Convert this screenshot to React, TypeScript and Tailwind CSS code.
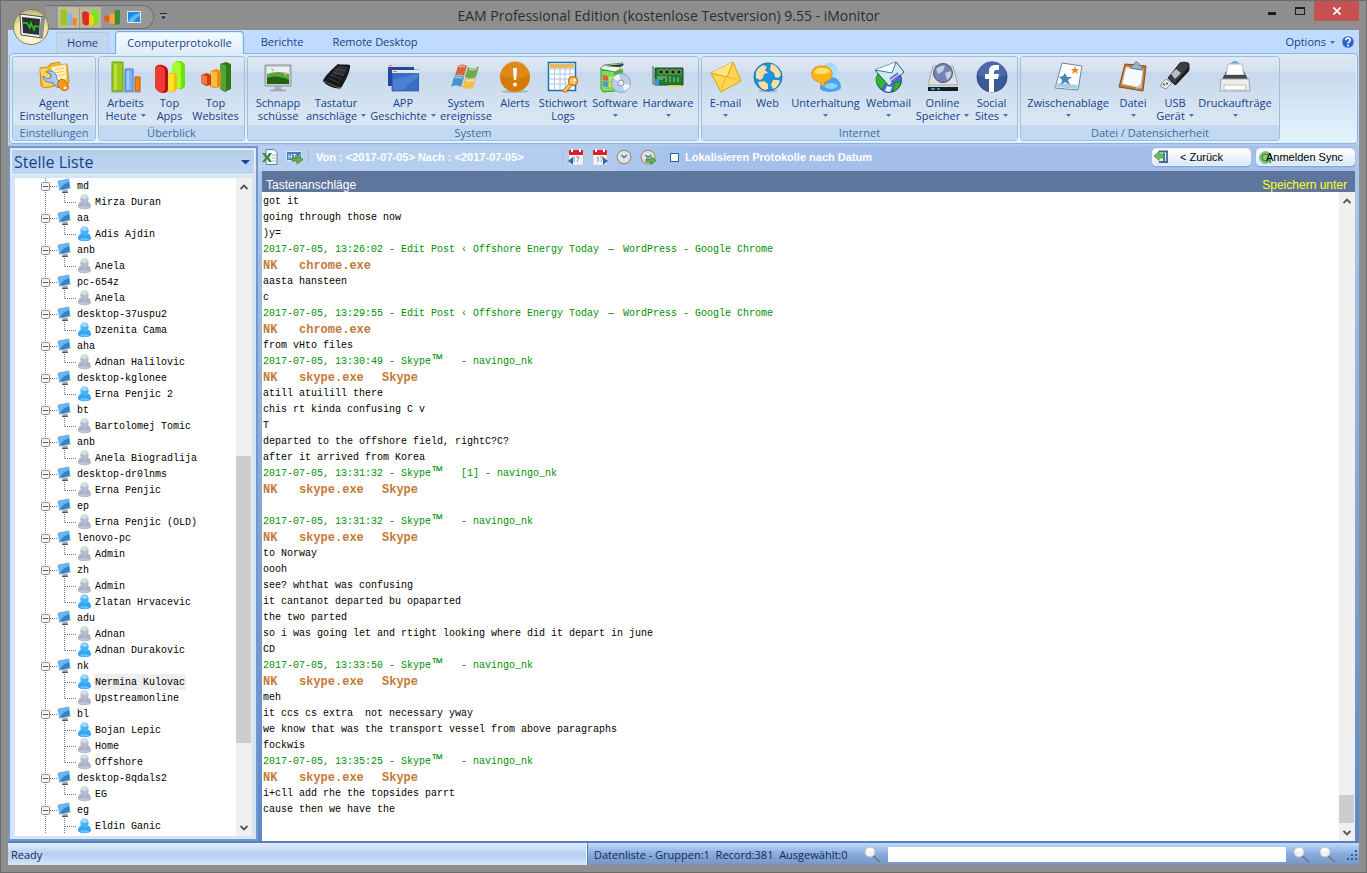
import { useState, type ReactNode } from 'react';

/* ---------- ribbon icons (32x32) ---------- */

const Icon = ({ children }: { children: ReactNode }) => (
  <svg width="32" height="32" viewBox="0 0 32 32" aria-hidden="true" className="shrink-0">
    {children}
  </svg>
);

const AgentIcon = () => (
  <Icon>
    <path d="M2 7l8-1 2-3 9-2 2 3 6-1 2 19-24 5-4-2z" fill="#f7b731" stroke="#d98a12" />
    <path d="M13 6l15-3 1 15-14 4z" fill="#fff3c4" stroke="#e2b24a" strokeWidth=".6" />
    <path d="M16 9l10-2M17 12l9-2M19 15l8-2" stroke="#f5c95a" />
    <path d="M2 8l7-1 5 18-8 1z" fill="#fbd25b" />
    <path d="M8 11c3-2 9-1 10 3 1 2 0 3 1 4l5 5-4 4-6-6c-4 1-9-1-9-6l4 3 4-1 0-4z" fill="#a9cdf6" stroke="#4b86cf" />
    <path d="M23 18l3 1 4 5c2 4-2 7-6 5l-5-5 1-3z" fill="#f39a25" stroke="#c46d0b" />
    <circle cx="27" cy="27" r="1.3" fill="#fff" />
  </Icon>
);

const BarsIcon = () => (
  <Icon>
    <path d="M1 31h30" stroke="#7f97a9" />
    <path d="M2 1h11v29H2z" fill="#9ccc14" stroke="#6c9c08" />
    <path d="M4 3h3v26H4z" fill="#b8df43" />
    <path d="M15 8h8v22h-8z" fill="#7fb0f5" stroke="#4779c6" />
    <path d="M17 10h2v19h-2z" fill="#a9cdfb" />
    <path d="M25 16h5v14h-5z" fill="#f68712" stroke="#b95a05" />
  </Icon>
);

const TopAppsIcon = () => (
  <Icon>
    <path d="M19 5c0-3 3-5 6-5s6 2 6 5v19c0 3-3 5-6 4z" fill="#6ee00e" />
    <path d="M18 5c0-3 3-5 6-4s3 2 3 5v20c-3 2-6 1-9 0z" fill="#a4ff2b" />
    <path d="M12 14c2-3 9-3 11 0v14c-2 4-9 4-11 1z" fill="#f7bd05" />
    <path d="M12 14c2-2 7-2 8 0v15c-2 2-7 2-8 0z" fill="#ffe22c" />
    <path d="M1 8c0-3 3-5 7-4s6 3 6 6v18c0 3-2 4-5 4S2 29 1 26z" fill="#b90d0d" />
    <path d="M1 9c0-4 3-5 6-4s4 3 4 5v18c0 3-2 3-4 3s-5-2-6-5z" fill="#ef3a32" />
  </Icon>
);

const TopSitesIcon = () => (
  <Icon>
    <path d="M20 3l6-2 5 2v25l-6 3-5-3z" fill="#2d7a1d" />
    <path d="M20 3l6 1v26l-6-2z" fill="#52a533" />
    <path d="M10 10l7-2 4 2v16l-6 1-5-1z" fill="#e58c15" />
    <path d="M10 10l7 1v15l-7-1z" fill="#fbbd3c" />
    <path d="M1 14l6-2 4 2v10l-5 1-5-3z" fill="#c93d18" />
    <path d="M1 14l6 1v9l-6-2z" fill="#f6763c" />
  </Icon>
);

const ScreenshotIcon = () => (
  <Icon>
    <path d="M3 4h26v21H3z" fill="#c4cad1" stroke="#8b949d" />
    <path d="M5 6h22v17H5z" fill="#e9f3ee" />
    <path d="M5 13q11-4 22 0v10H5z" fill="#57a83c" />
    <path d="M5 17q10-4 22 2v4H5z" fill="#226015" />
    <path d="M9 7l3 1-1 3zM22 12l3-1-1 5" fill="#ef9cc1" />
    <path d="M13 25h6l1 4h-8z" fill="#a6adb5" />
    <path d="M8 29.500h16" stroke="#9aa2aa" strokeWidth="1.600" />
  </Icon>
);

const KeyboardIcon = () => (
  <Icon>
    <path d="M18 3c3 1 8 0 12 1 1 5-5 17-9 23-3 2-15-2-18-7C3 17 13 7 18 3z" fill="#17191b" />
    <path d="M18 5l10 1-5 10c-4-3-9-3-13 0z" fill="#2e3236" />
    <path d="M15 8l11 2M13 11l11 3M10 14l12 4M8 17l12 5" stroke="#4b5157" strokeWidth=".7" />
    <path d="M4 20c4 2 11 6 17 7" stroke="#5d666f" fill="none" />
  </Icon>
);

const AppIcon = () => (
  <Icon>
    <path d="M1 3h26v22H1z" fill="#23489f" />
    <path d="M1 3h26v3H1z" fill="#d8dde4" />
    <path d="M2 4.500h3" stroke="#e38439" />
    <path d="M5 9h27v21H5z" fill="#3a6fc6" stroke="#24509f" strokeWidth=".7" />
    <path d="M5 9h27v3H5z" fill="#e4e7ea" />
    <path d="M6 10.500h4" stroke="#e38439" />
    <path d="M6 29V18q13-1 25-6v4q-9 6-14 13z" fill="#5f92de" opacity=".5" />
  </Icon>
);

const WindowsIcon = () => (
  <Icon>
    <path d="M8 5c3-2 6-2 9 0l-3 10c-3-2-6-2-9 0z" fill="#d9633a" />
    <path d="M18 6c3 2 7 2 11-1l-3 11c-4 2-8 2-11 0z" fill="#74a94a" />
    <path d="M4 16c3-2 7-2 10 0l-3 10c-3-2-7-2-10 0z" fill="#4693cb" />
    <path d="M15 17c3 2 7 2 11 0l-3 10c-4 2-8 1-11-1z" fill="#f0bf4d" />
    <path d="M9 6c3-1 5-1 6 0M5 17c3-1 5-1 7 0M19 8c3 1 6 1 8-1M16 19c3 1 6 1 8 0" stroke="#fff" strokeWidth="1.500" opacity=".5" fill="none" />
  </Icon>
);

const AlertIcon = () => (
  <Icon>
    <ellipse cx="16" cy="30.500" rx="14" ry="1.300" fill="#8a94a0" opacity=".6" />
    <circle cx="16" cy="16" r="15" fill="#d57a05" />
    <path d="M2 14a14 14 0 0128 0c-8 4-20 4-28 0z" fill="#e8962b" opacity=".5" />
    <path d="M14 7h4l-.8 12h-2.400z" fill="#fff" />
    <circle cx="16" cy="23.500" r="2" fill="#fff" />
  </Icon>
);

const KeywordIcon = () => (
  <Icon>
    <path d="M1.500 1.500h27v28h-27z" fill="#fff" stroke="#1d70ab" strokeWidth="1.500" />
    <path d="M3 3h24v4H3z" fill="#f8b545" />
    <path d="M2 8h26M2 13h26M2 18h26M2 23h26M7.500 2v27M13 2v27M18 2v27M23 2v27" stroke="#a9c6e3" />
    <circle cx="26" cy="20" r="4.500" fill="#f7c063" stroke="#c07a1b" strokeWidth="1.400" />
    <path d="M22 23l-6 6v2h4v-2h2v-2l4-3z" fill="#f7c063" stroke="#c07a1b" />
    <circle cx="27.500" cy="19" r="1.200" fill="#fff" />
  </Icon>
);

const Disc = () => (
  <>
    <circle cx="22" cy="22" r="9.500" fill="#b8cdea" stroke="#7790b5" strokeWidth=".7" />
    <path d="M22 22L14 17a9 9 0 016-4zM22 22l9 2a9 9 0 01-5 6z" fill="#fff" opacity=".8" />
    <circle cx="22" cy="22" r="3" fill="#e8eef7" stroke="#6f87ad" strokeWidth=".8" />
  </>
);

const SoftwareIcon = () => (
  <Icon>
    <path d="M2 9l14 1v20l-12 1-2-3z" fill="#7ddc5b" stroke="#3b9c35" />
    <path d="M16 10l8-2v20l-8 2z" fill="#4bb23e" />
    <path d="M1 8l4-4 19-2-4 7-4 2z" fill="#eef4ee" stroke="#3b7a3b" strokeWidth=".8" />
    <path d="M5 5l19-2 1 1-5 2z" fill="#1f3a26" />
    <path d="M4 14l5 1v5l-5-1z" fill="#e2603a" />
    <path d="M10 15l5 1v4h-5z" fill="#b9ec6a" />
    <path d="M4 20l5 1v5l-5-1z" fill="#4a95d9" />
    <path d="M10 21h5v5h-5z" fill="#f3d256" />
    <Disc />
  </Icon>
);

const HardwareIcon = () => (
  <Icon>
    <path d="M1 5v19" stroke="#7b828a" strokeWidth="1.500" />
    <path d="M3 7h28v17H3z" fill="#1f7a35" stroke="#0f5220" />
    <path d="M7 9h4v4H7zM13 9h4v4h-4zM19 9h4v4h-4zM25 9h4v4h-4z" fill="#101a12" stroke="#c7cf7d" strokeWidth=".7" />
    <path d="M5 16h8M5 18h6M14 15v6M18 15v6M22 16v5M26 16v5" stroke="#8fd28a" />
    <path d="M16 24h13v2H16z" fill="#e6d64c" />
    <path d="M3 18h4v6H3z" fill="#3c93e6" />
  </Icon>
);

const MailIcon = () => (
  <Icon>
    <path d="M1 12L23 1l8 19-20 11z" fill="#fdd550" stroke="#d8a01c" />
    <path d="M1 12l16 4L23 1" fill="#ffe583" stroke="#d8a01c" />
    <path d="M11 31l4-14M31 20l-13-4" stroke="#e8b93a" fill="none" />
  </Icon>
);

const WebIcon = () => (
  <Icon>
    <ellipse cx="16" cy="30" rx="10" ry="1.400" fill="#8a94a0" opacity=".5" />
    <circle cx="16" cy="16" r="14" fill="#1e94d6" stroke="#1277b3" />
    <path d="M4 12c1-4 4-7 8-8l3 2-2 3 3 3-4 1-1 4-3 2-4-2z" fill="#fbdca2" />
    <path d="M19 3c5 1 9 5 10 11l-3 3-3-1-1-4-4-3z" fill="#fbdca2" />
    <path d="M6 21l6-1 4 3v5l-3 1c-4-1-6-4-7-8z" fill="#fbdca2" />
    <path d="M21 19l5 0 2 1c-1 4-4 7-7 8l-2-4z" fill="#fbdca2" />
  </Icon>
);

const ChatIcon = () => (
  <Icon>
    <circle cx="20" cy="9" r="7.500" fill="#a5dbfb" />
    <path d="M10 27c0-8 5-11 11-11s10 4 10 11c-4 5-17 5-21 1z" fill="#4aa3ef" />
    <path d="M14 25c3-4 11-4 14 0-3 4-11 4-14 0z" fill="#8fd0fb" />
    <path d="M2 13c0-6 4-8 10-8s10 3 10 8-4 7-7 8l-2 5-3-5c-5-1-8-3-8-8z" fill="#fcb514" stroke="#e58f0a" />
    <path d="M4 12c1-4 4-5 8-5s7 1 8 4c-5 2-11 3-16 1z" fill="#ffe06a" />
  </Icon>
);

const WebmailIcon = () => (
  <Icon>
    <circle cx="16" cy="19" r="12.500" fill="#4a6fd8" stroke="#2b3f8f" />
    <path d="M3 17c3-5 6-7 9-8l3 10-6 9c-4-2-6-6-6-11zM22 21l6 0c-1 5-4 8-8 10z" fill="#33b533" stroke="#14701c" strokeWidth=".7" />
    <path d="M14 25l5 1-2 5-5-1z" fill="#e5eefc" />
    <path d="M2 9L23 1l8 10-15 14z" fill="#c9ecf5" stroke="#2d5666" />
    <path d="M2 9l17 3L23 1" fill="#effcff" stroke="#2d5666" strokeWidth=".8" />
    <path d="M17 18l8-6M18 21l9-7" stroke="#6e63c6" strokeWidth="1.600" />
  </Icon>
);

const OnlineIcon = () => (
  <Icon>
    <path d="M6 5h20l5 19H1z" fill="#dfe1e3" stroke="#a5a9ad" />
    <path d="M1 26h30v4H1z" fill="#1b1d20" />
    <path d="M4 28h4M10 28h3" stroke="#2fc3d8" strokeWidth="1.500" />
    <circle cx="16" cy="12" r="9.500" fill="#7583b0" stroke="#49557e" />
    <path d="M9 8c3-3 7-4 9-3l-2 5-5 3zM18 12l6-2c1 4-1 7-4 9z" fill="#c7d0e8" />
  </Icon>
);

const SocialIcon = () => (
  <Icon>
    <circle cx="16" cy="16" r="15" fill="#3b5998" stroke="#2c447a" />
    <path d="M2 14a14 14 0 0128 0c-7 3-20 3-28 0z" fill="#6a86c0" opacity=".4" />
    <path d="M13 31V18H9v-5h4v-3c0-4 3-6 6-6h4v5h-3c-1 0-2 1-2 2v2h5l-1 5h-4v13z" fill="#fff" />
  </Icon>
);

const ClipboardIcon = () => (
  <Icon>
    <path d="M10 2l20 3-4 24-23-2z" fill="#fdfefe" stroke="#6e8796" />
    <path d="M3 26l22 2 1-4-21-2z" fill="#a5d2e8" />
    <path d="M13 12l2 4 5 0-4 3 2 5-5-3-4 3 1-5-3-3 4-1z" fill="#4a86b5" />
    <path d="M23 5l1 3 3 0-2 2 1 3-3-2-3 2 1-3-2-2 3 0z" fill="#f08a2b" />
  </Icon>
);

const FileIcon = () => (
  <Icon>
    <path d="M8 3l21 2-3 25-24-4z" fill="#c07a30" stroke="#8a4f15" />
    <path d="M9 6l17 2-2 19-19-4z" fill="#f9fafb" stroke="#c3c8cc" />
    <path d="M18 28l6-1 1-6z" fill="#bfc6cc" />
    <path d="M13 7l2-3h2c0-4 5-4 5 0l3 1v4z" fill="#9fb4be" stroke="#5c7480" />
  </Icon>
);

const UsbIcon = () => (
  <Icon>
    <path d="M21 2c1-1 9-1 9 1v6L16 24l-7-7z" fill="#3b3f43" stroke="#1f2224" />
    <path d="M30 5v5L17 24l-1-2z" fill="#1c1e20" />
    <path d="M12 13l5-5 5 4-6 6z" fill="#b9bdc1" />
    <path d="M7 18l6 4-6 6-5-2v-3z" fill="#e8e9ea" stroke="#8d9296" />
    <path d="M4 23l2 1M7 22l2 1" stroke="#55595d" strokeWidth="1.500" />
  </Icon>
);

const PrinterIcon = () => (
  <Icon>
    <path d="M12 3c1-3 7-3 8 0" fill="#7ab9de" stroke="#4a90bd" />
    <path d="M6 12l2-3h16l2 3 2 8H4z" fill="#5a5f63" />
    <path d="M9 3h14l2 11H7z" fill="#fbfdff" stroke="#a9bccb" />
    <path d="M5 14h22l2 5H3z" fill="#43484c" />
    <path d="M2 18h28l1 12H1z" fill="#eceeee" stroke="#a1a5a8" />
    <path d="M5 24h22v5H5z" fill="#fdfdfd" stroke="#bbbfc2" />
  </Icon>
);

/* ---------- data ---------- */

type RibbonItem = {
  lines: string[];
  icon: () => ReactNode;
  width: string;
  menu?: boolean;
};

const RIBBON: { name: string; items: RibbonItem[] }[] = [
  {
    name: 'Einstellungen',
    items: [{ lines: ['Agent', 'Einstellungen'], icon: AgentIcon, width: 'w-20' }],
  },
  {
    name: 'Überblick',
    items: [
      { lines: ['Arbeits', 'Heute'], icon: BarsIcon, width: 'w-11', menu: true },
      { lines: ['Top', 'Apps'], icon: TopAppsIcon, width: 'w-11' },
      { lines: ['Top', 'Websites'], icon: TopSitesIcon, width: 'w-12' },
    ],
  },
  {
    name: 'System',
    items: [
      { lines: ['Schnapp', 'schüsse'], icon: ScreenshotIcon, width: 'w-[54px]' },
      { lines: ['Tastatur', 'anschläge'], icon: KeyboardIcon, width: 'w-[62px]', menu: true },
      { lines: ['APP', 'Geschichte'], icon: AppIcon, width: 'w-[72px]', menu: true },
      { lines: ['System', 'ereignisse'], icon: WindowsIcon, width: 'w-[54px]' },
      { lines: ['Alerts'], icon: AlertIcon, width: 'w-11' },
      { lines: ['Stichwort', 'Logs'], icon: KeywordIcon, width: 'w-[52px]' },
      { lines: ['Software'], icon: SoftwareIcon, width: 'w-[52px]', menu: true },
      { lines: ['Hardware'], icon: HardwareIcon, width: 'w-[54px]', menu: true },
    ],
  },
  {
    name: 'Internet',
    items: [
      { lines: ['E-mail'], icon: MailIcon, width: 'w-10', menu: true },
      { lines: ['Web'], icon: WebIcon, width: 'w-11' },
      { lines: ['Unterhaltung'], icon: ChatIcon, width: 'w-[72px]', menu: true },
      { lines: ['Webmail'], icon: WebmailIcon, width: 'w-[54px]', menu: true },
      { lines: ['Online', 'Speicher'], icon: OnlineIcon, width: 'w-[54px]', menu: true },
      { lines: ['Social', 'Sites'], icon: SocialIcon, width: 'w-11', menu: true },
    ],
  },
  {
    name: 'Datei / Datensicherheit',
    items: [
      { lines: ['Zwischenablage'], icon: ClipboardIcon, width: 'w-[86px]', menu: true },
      { lines: ['Datei'], icon: FileIcon, width: 'w-11', menu: true },
      { lines: ['USB', 'Gerät'], icon: UsbIcon, width: 'w-10', menu: true },
      { lines: ['Druckaufträge'], icon: PrinterIcon, width: 'w-20', menu: true },
    ],
  },
];

const GROUP_WIDTHS = ['w-[84px]', 'w-[147px]', 'w-[452px]', 'w-[317px]', 'w-[260px]'];

type Agent = { name: string; online?: boolean };

const TREE: { pc: string; users: Agent[] }[] = [
  { pc: 'md', users: [{ name: 'Mirza Duran' }] },
  { pc: 'aa', users: [{ name: 'Adis Ajdin', online: true }] },
  { pc: 'anb', users: [{ name: 'Anela' }] },
  { pc: 'pc-654z', users: [{ name: 'Anela' }] },
  { pc: 'desktop-37uspu2', users: [{ name: 'Dzenita Cama', online: true }] },
  { pc: 'aha', users: [{ name: 'Adnan Halilovic' }] },
  { pc: 'desktop-kglonee', users: [{ name: 'Erna Penjic 2', online: true }] },
  { pc: 'bt', users: [{ name: 'Bartolomej Tomic' }] },
  { pc: 'anb', users: [{ name: 'Anela Biogradlija' }] },
  { pc: 'desktop-dr0lnms', users: [{ name: 'Erna Penjic' }] },
  { pc: 'ep', users: [{ name: 'Erna Penjic (OLD)' }] },
  { pc: 'lenovo-pc', users: [{ name: 'Admin' }] },
  { pc: 'zh', users: [{ name: 'Admin' }, { name: 'Zlatan Hrvacevic', online: true }] },
  { pc: 'adu', users: [{ name: 'Adnan' }, { name: 'Adnan Durakovic', online: true }] },
  { pc: 'nk', users: [{ name: 'Nermina Kulovac', online: true }, { name: 'Upstreamonline' }] },
  { pc: 'bl', users: [{ name: 'Bojan Lepic', online: true }, { name: 'Home' }, { name: 'Offshore' }] },
  { pc: 'desktop-8qdals2', users: [{ name: 'EG' }] },
  { pc: 'eg', users: [{ name: 'Eldin Ganic', online: true }] },
];

type LogLine =
  | { kind: 'text'; text: string }
  | { kind: 'head'; text: string }
  | { kind: 'app'; exe: string; app?: string };

const text = (t: string): LogLine => ({ kind: 'text', text: t });
const head = (t: string): LogLine => ({ kind: 'head', text: t });
const skype: LogLine = { kind: 'app', exe: 'skype.exe', app: 'Skype' };
const chrome: LogLine = { kind: 'app', exe: 'chrome.exe' };

const LOG: LogLine[] = [
  text('got it'),
  text('going through those now'),
  text(')y='),
  head('2017-07-05, 13:26:02 - Edit Post ‹ Offshore Energy Today — WordPress - Google Chrome'),
  chrome,
  text('aasta hansteen'),
  text('c'),
  head('2017-07-05, 13:29:55 - Edit Post ‹ Offshore Energy Today — WordPress - Google Chrome'),
  chrome,
  text('from vHto files'),
  head('2017-07-05, 13:30:49 - Skype™   - navingo_nk'),
  skype,
  text('atill atuilill there'),
  text('chis rt kinda confusing C v'),
  text('T'),
  text('departed to the offshore field, rightC?C?'),
  text('after it arrived from Korea'),
  head('2017-07-05, 13:31:32 - Skype™   [1] - navingo_nk'),
  skype,
  text(''),
  head('2017-07-05, 13:31:32 - Skype™   - navingo_nk'),
  skype,
  text('to Norway'),
  text('oooh'),
  text('see? whthat was confusing'),
  text('it cantanot departed bu opaparted'),
  text('the two parted'),
  text('so i was going let and rtight looking where did it depart in june'),
  text('CD'),
  head('2017-07-05, 13:33:50 - Skype™   - navingo_nk'),
  skype,
  text('meh'),
  text('it ccs cs extra  not necessary yway'),
  text('we know that was the transport vessel from above paragraphs'),
  text('fockwis'),
  head('2017-07-05, 13:35:25 - Skype™   - navingo_nk'),
  skype,
  text('i+cll add rhe the topsides parrt'),
  text('cause then we have the'),
];

/* ---------- small parts ---------- */

const Caret = () => (
  <svg width="5" height="3" viewBox="0 0 5 3" aria-hidden="true" className="inline-block shrink-0">
    <path d="M0 0h5L2.500 3z" fill="#4a72b0" />
  </svg>
);

function RibbonButton({ item }: { item: RibbonItem }) {
  const ItemIcon = item.icon;
  const single = item.lines.length === 1;
  return (
    <button type="button" className={`flex flex-col items-center whitespace-nowrap text-[#15428b] ${item.width}`}>
      <ItemIcon />
      <span className="mt-[3px] leading-[13px]">{item.lines[0]}</span>
      <span className="flex h-[13px] items-center gap-1 leading-[13px]">
        {!single && item.lines[1]}
        {item.menu && <Caret />}
      </span>
    </button>
  );
}

function ScrollBar({ before, thumb, after }: { before: string; thumb: string; after: string }) {
  return (
    <div className="flex w-4 shrink-0 flex-col bg-[#f0f0f0]">
      <button type="button" aria-label="Nach oben" className="flex h-[17px] items-center justify-center">
        <svg width="8" height="6" viewBox="0 0 8 6">
          <path d="M.5 5L4 1.500 7.500 5" fill="none" stroke="#555" strokeWidth="1.800" />
        </svg>
      </button>
      <div className={`basis-0 ${before}`} />
      <div className={`mr-px basis-0 bg-[#cdcdcd] ${thumb}`} />
      <div className={`basis-0 ${after}`} />
      <button type="button" aria-label="Nach unten" className="flex h-[17px] items-center justify-center">
        <svg width="8" height="6" viewBox="0 0 8 6">
          <path d="M.5 1L4 4.500 7.500 1" fill="none" stroke="#555" strokeWidth="1.800" />
        </svg>
      </button>
    </div>
  );
}

const PcIcon = () => (
  <svg width="15" height="16" viewBox="0 0 15 16" aria-hidden="true" className="shrink-0">
    <path d="M5 12l5-1 1 3-5 1z" fill="#9a9fa5" />
    <path d="M0 3l12-3 2 11-12 2z" fill="#d2dbe4" />
    <path d="M1 3l11-2 1 9-10 2z" fill="#2b86cf" />
    <path d="M1 3l11-2v3Q6 6 3 11z" fill="#6cb6ec" />
    <path d="M5 14.500h6" stroke="#5b6067" />
  </svg>
);

const UserIcon = ({ online }: { online?: boolean }) => (
  <svg width="13" height="16" viewBox="0 0 13 16" aria-hidden="true" className="shrink-0">
    <path d="M0 13c0-4 2-6 6.500-6S13 9 13 13c-2 3-11 3-13 0z" fill={online ? '#36a5f8' : '#adb5c8'} />
    <path d="M2 13.500c1-2 8-2 9 0-1 1.500-8 1.500-9 0z" fill={online ? '#62c3ff' : '#bfc6d5'} />
    <ellipse cx="6.500" cy="5" rx="4.200" ry="4.600" fill={online ? '#49b0fa' : '#b4bccd'} />
    <path d="M3.200 4c1-4 5.600-4 6.600 0-2 1-4.600 1-6.600 0z" fill={online ? '#9fdcff' : '#dde1e9'} />
  </svg>
);

const Magnifier = () => (
  <svg width="17" height="17" viewBox="0 0 17 17" aria-hidden="true">
    <path d="M8 9l8 7" stroke="#6d7277" strokeWidth="1.500" />
    <circle cx="6" cy="6" r="5" fill="#f2f3f3" stroke="#c3c7ca" />
    <path d="M2 5c1-3 6-4 8-1-2 2-5 2-8 1z" fill="#fff" />
  </svg>
);

const Calendar = ({ next }: { next?: boolean }) => (
  <svg width="16" height="16" viewBox="0 0 16 16" aria-hidden="true">
    <path d="M1 5h14v11H1z" fill="#f4f4f4" stroke="#c7c9cc" strokeWidth=".6" />
    <path d="M1 1h14v5H1z" fill="#d9252a" />
    <path d="M4 0v3M12 0v3" stroke="#fff" strokeWidth="2" />
    <path d="M5 9l1-1v5M8 8h3l-2 5" stroke="#8b9096" fill="none" />
    {next ? <path d="M11 8l5 4-5 4z" fill="#2d66c4" /> : <path d="M5 8l-5 4 5 4z" fill="#2d66c4" />}
  </svg>
);

const Clock = ({ go }: { go?: boolean }) => (
  <svg width="16" height="16" viewBox="0 0 16 16" aria-hidden="true">
    <circle cx="8" cy="8" r="6.800" fill="#f3f7fb" stroke="#a39a7c" strokeWidth="1.400" />
    <circle cx="8" cy="8" r="4.800" fill="#dbe9f6" stroke="#b9cbdc" strokeWidth=".6" />
    <path d="M5.500 6L8 8.500 11 6" stroke="#51657c" strokeWidth="1.300" fill="none" />
    {go && <path d="M6 10h5V7.500l5 4-5 4V13H6z" fill="#5cb648" stroke="#2f7a27" strokeWidth=".7" />}
  </svg>
);

const Separator = () => <span className="h-4 w-px bg-[#a3bfe2]" />;

function TitleBar() {
  return (
    <header className="relative flex h-[29px] shrink-0 items-start">
      {/* Schnellzugriff */}
      <div className="ml-[38px] mt-1 flex h-6 w-[108px] items-center rounded-r-full border border-l-0 border-[#707070] bg-[#979797] pl-3">
        <button type="button" aria-label="Arbeits Heute" className="flex h-[21px] w-[21px] items-center justify-center bg-[#c4bd9d]">
          <svg width="17" height="17" viewBox="0 0 32 32">
            <path d="M1 1h12v30H1z" fill="#97c81c" />
            <path d="M14 8h9v23h-9z" fill="#85b2f2" />
            <path d="M24 17h7v14h-7z" fill="#f08316" />
          </svg>
        </button>
        <button type="button" aria-label="Top Apps" className="flex h-[21px] w-[22px] items-center justify-center border-l border-[#979797] bg-[#bcb59a]">
          <svg width="17" height="17" viewBox="0 0 32 32">
            <path d="M19 3q6-6 12 1v21l-7 4-5-3z" fill="#7be61b" />
            <path d="M10 13q6-4 12 0v16q-6 4-12 0z" fill="#fccf16" />
            <path d="M0 7q7-6 13 1v21q-8 5-12-3z" fill="#df2a22" />
          </svg>
        </button>
        <button type="button" aria-label="Top Websites" className="flex h-[21px] w-[22px] items-center justify-center">
          <svg width="17" height="17" viewBox="0 0 32 32">
            <path d="M20 3l10-2v27l-10 2z" fill="#3f8d2a" />
            <path d="M10 9l10-1v20l-10-1z" fill="#f5a72c" />
            <path d="M0 13l10-1v13L0 22z" fill="#e75d28" />
          </svg>
        </button>
        <button type="button" aria-label="Desktop" className="flex h-[21px] w-[22px] items-center justify-center">
          <svg width="14" height="12" viewBox="0 0 14 12">
            <path d="M.5.5h13v11H.5z" fill="#2489dc" stroke="#dce8f2" />
            <path d="M1 11Q4 4 13 2v3Q8 7 7 11z" fill="#5cb7f3" />
          </svg>
        </button>
      </div>
      <svg width="7" height="8" viewBox="0 0 7 8" aria-hidden="true" className="ml-1.5 mt-3">
        <path d="M0 .5h7" stroke="#222a44" />
        <path d="M0 3h7L3.500 7z" fill="#222a44" stroke="#dfe4ee" strokeWidth=".5" />
      </svg>
      <h1 className="flex-1 whitespace-nowrap pr-[88px] text-center text-[14px] leading-[30px] text-[#2d2d2d]">
        EAM Professional Edition (kostenlose Testversion) 9.55 - iMonitor
      </h1>
      <button type="button" aria-label="Minimieren" className="flex h-5 w-7 items-center justify-center">
        <span className="mt-1 h-[3px] w-2 bg-[#1c1c1c]" />
      </button>
      <button type="button" aria-label="Maximieren" className="flex h-5 w-7 items-center justify-center">
        <span className="h-2 w-2.5 border border-t-2 border-[#1c1c1c]" />
      </button>
      <button type="button" aria-label="Schließen" className="flex h-5 w-[45px] items-center justify-center bg-[#c75050]">
        <svg width="8" height="8" viewBox="0 0 8 8">
          <path d="M.5.5l7 7M7.500.5l-7 7" stroke="#fff" strokeWidth="1.700" />
        </svg>
      </button>
      {/* Anwendungsknopf über Titel und Registern */}
      <button type="button" aria-label="iMonitor" className="absolute left-1 top-1.5 z-10">
        <svg width="38" height="38" viewBox="0 0 38 38">
          <defs>
            <radialGradient id="orb" cx=".5" cy=".75" r=".8">
              <stop offset="0" stopColor="#fffde9" />
              <stop offset=".6" stopColor="#f0e6a0" />
              <stop offset="1" stopColor="#b5ab74" />
            </radialGradient>
          </defs>
          <circle cx="19" cy="20" r="17.500" fill="url(#orb)" stroke="#857d57" />
          <path d="M8 7l24 3-2 21-21-3z" fill="#f4f5f5" stroke="#4c4f52" />
          <path d="M29 10l4 1-2 20-4-1z" fill="#8d9194" />
          <path d="M10 10l18 2-1 16-16-2z" fill="#2b3132" />
          <path d="M11 16h4l3 5 1-5 3 7 1-4 5 1" stroke="#2fc42f" strokeWidth="1.500" fill="none" />
        </svg>
      </button>
    </header>
  );
}

function Tabs() {
  return (
    <nav className="flex h-[23px] shrink-0 items-end bg-[#bfdbff] pl-12 text-[11px] text-[#15428b]">
      <a href="#home" className="flex h-[21px] w-[53px] items-center justify-center border-x border-t border-[#b2cbea] bg-[#c2d6ee]">
        Home
      </a>
      <a
        href="#computerprotokolle"
        aria-current="page"
        className="z-[1] -mb-px ml-1.5 flex h-[23px] w-[129px] items-center justify-center rounded-t border-x border-t border-[#7ba7dc] bg-gradient-to-b from-[#f4fafe] to-[#e3edf8] shadow-[inset_0_0_0_1px_#c9f2fd]"
      >
        Computerprotokolle
      </a>
      <a href="#berichte" className="flex h-[21px] w-[76px] items-center justify-center">
        Berichte
      </a>
      <a href="#remote" className="flex h-[21px] w-[110px] items-center justify-center">
        Remote Desktop
      </a>
      <button type="button" className="ml-auto flex h-[22px] items-center gap-1">
        Options
        <Caret />
      </button>
      <button type="button" aria-label="Hilfe" className="ml-1.5 mr-1 flex h-[23px] items-center">
        <svg width="14" height="14" viewBox="0 0 14 14">
          <circle cx="7" cy="7" r="6.300" fill="#2963cf" stroke="#dfe8f6" />
          <path d="M4.800 5.300c0-3 4.500-2.800 4.500-.3C9.300 6.700 7 6.600 7 8.500" stroke="#fff" strokeWidth="1.600" fill="none" />
          <circle cx="7" cy="10.600" r="1" fill="#fff" />
        </svg>
      </button>
    </nav>
  );
}

function Ribbon() {
  return (
    <section className="mx-px flex h-[91px] shrink-0 gap-0.5 rounded border border-[#8db2e3] bg-[linear-gradient(#dfe9f4,#d5e1f0_17px,#c7d8ed_18px,#e3f6fd)] p-0.5 text-[11px] shadow-[inset_0_0_0_1px_#d8f0fc]">
      {RIBBON.map((group, i) => (
        <fieldset key={group.name} className={`flex shrink-0 flex-col overflow-hidden rounded-[3px] border border-[#9fbedd] ${GROUP_WIDTHS[i]}`}>
          <div className="flex flex-1 justify-center bg-[linear-gradient(#dfe9f4,#d5e1f0_14px,#c7d8ed_15px,#dbe8f4)] pt-1">
            {group.items.map((item) => (
              <RibbonButton key={item.lines.join(' ')} item={item} />
            ))}
          </div>
          <div className="h-[15px] bg-[#c2d9f1] text-center leading-[15px] text-[#3e6aaa]">{group.name}</div>
        </fieldset>
      ))}
    </section>
  );
}

function TreePanel() {
  const [selected, setSelected] = useState('Nermina Kulovac');

  return (
    <aside className="flex w-[250px] shrink-0 flex-col border-2 border-[#7297c9] bg-[#d6e5f4]">
      <div className="m-px flex h-[26px] shrink-0 items-center justify-between border border-[#e8f3fd] bg-gradient-to-b from-[#b5cdea] to-[#bdd6f0] pl-0.5 pr-1 text-[#15428b]">
        <h2 className="text-[16px]">Stelle Liste</h2>
        <svg width="9" height="5" viewBox="0 0 9 5" aria-hidden="true">
          <path d="M0 0h9L4.500 4.500z" fill="#0f4596" />
        </svg>
      </div>
      <div className="mb-[3px] ml-[5px] mr-1 mt-0.5 flex min-h-0 flex-1 bg-white">
        <ul className="min-w-0 flex-1 overflow-hidden font-['Liberation_Mono','Noto_Sans_CJK_SC',monospace] text-[10px] text-black">
          {TREE.map((node, n) => (
            <li key={n}>
              <div className="flex h-4 items-center">
                <button type="button" aria-label={`${node.pc} zuklappen`}>
                  <svg width="42" height="16" viewBox="0 0 42 16" className="block">
                    <path d="M30.500 0v16M35 8.500h7" stroke="#777" strokeDasharray="1 1" />
                    <rect x="26.500" y="4.500" width="8" height="8" rx="1" fill="#f7f7f7" stroke="#919191" />
                    <path d="M28 8.500h5" stroke="#3a55a8" />
                  </svg>
                </button>
                <PcIcon />
                <span className="ml-[5px]">{node.pc}</span>
              </div>
              <ul>
                {node.users.map((user, u) => {
                  const last = u === node.users.length - 1 && n !== TREE.length - 1;
                  return (
                    <li key={user.name} className="flex h-4 items-center">
                      <svg width="63" height="16" viewBox="0 0 63 16" aria-hidden="true" className="shrink-0">
                        <path d="M30.500 0v16M50 8.500h11" stroke="#777" strokeDasharray="1 1" />
                        <path d={last ? 'M49.500 0v9' : 'M49.500 0v16'} stroke="#777" strokeDasharray="1 1" />
                      </svg>
                      <UserIcon online={user.online} />
                      <button
                        type="button"
                        onClick={() => setSelected(user.name)}
                        className={`ml-[3px] h-4 px-px ${selected === user.name ? 'bg-[#efefef]' : ''}`}
                      >
                        {user.name}
                      </button>
                    </li>
                  );
                })}
              </ul>
            </li>
          ))}
        </ul>
        <ScrollBar before="grow-[261]" thumb="grow-[286]" after="grow-[76]" />
      </div>
    </aside>
  );
}

/* full-width glyphs take two cells of the grid */
const Cells = ({ value }: { value: string }) => (
  <>
    {value.split(/([—™])/).map((part, i) =>
      part === '—' || part === '™' ? (
        <span key={i} className={`inline-block w-3 text-center align-top leading-4 ${part === '™' ? 'text-[16px]' : ''}`}>
          {part}
        </span>
      ) : (
        part
      ),
    )}
  </>
);

function LogRow({ line }: { line: LogLine }) {
  if (line.kind === 'app') {
    return (
      <p className="flex h-4 text-[12px] font-bold text-[#c47a3a]">
        <span className="w-9">NK</span>
        <span className="w-[83px]">{line.exe}</span>
        {line.app && <span>{line.app}</span>}
      </p>
    );
  }
  return (
    <p className={`h-4 whitespace-pre ${line.kind === 'head' ? 'text-[#009000]' : 'text-black'}`}>
      <Cells value={line.text} />
    </p>
  );
}

function ToolBar() {
  return (
    <div className="flex h-[25px] shrink-0 items-center bg-[linear-gradient(90deg,#b9d0ef,#b4cdee_30%,#a4c0ea_40%,#a4c0ea)] pb-[3px] pl-1 font-['Liberation_Sans',sans-serif] text-[11px] font-bold text-white">
      <button type="button" aria-label="Excel">
        <svg width="16" height="16" viewBox="0 0 16 16">
          <path d="M4 .5h8l3 3v12H4z" fill="#f4f8fc" stroke="#5583b8" />
          <path d="M10 6h4M10 9h4M10 12h4" stroke="#9ec39b" />
          <path d="M0 4h3l2 3 2-3h3L7 8.500 10 13H7l-2-3-2 3H0l3.500-4.500z" fill="#3f8b3d" />
        </svg>
      </button>
      <button type="button" aria-label="HTML" className="ml-2">
        <svg width="17" height="14" viewBox="0 0 17 14">
          <path d="M.5 1.500h15v9H.5z" fill="#4a7fc1" stroke="#dce9f8" />
          <path d="M3 4v5M3 6.500h2M5.500 4v5M7 4.500h3M8.500 4.500v4M11 9V5l1.500 2L14 5" stroke="#fff" strokeWidth=".8" fill="none" />
          <path d="M6 8h5V5l6 4.500-6 4.500v-3H6z" fill="#62b347" stroke="#357d25" strokeWidth=".7" />
        </svg>
      </button>
      <div className="flex items-center pl-[5px] pr-[7px]">
        <Separator />
      </div>
      <span className="w-[246px] whitespace-nowrap">{'Von : <2017-07-05> Nach : <2017-07-05>'}</span>
      <Separator />
      <div className="flex items-center gap-2 px-[5px]">
        <button type="button" aria-label="Vorheriger Tag">
          <Calendar />
        </button>
        <button type="button" aria-label="Nächster Tag">
          <Calendar next />
        </button>
        <button type="button" aria-label="Zeit">
          <Clock />
        </button>
        <button type="button" aria-label="Zeit anwenden">
          <Clock go />
        </button>
      </div>
      <Separator />
      <label className="ml-2 flex items-center gap-1.5 whitespace-nowrap">
        <input type="checkbox" className="h-[9px] w-[9px] appearance-none border border-[#1f62ad] bg-white checked:bg-[#1f62ad]" />
        Lokalisieren Protokolle nach Datum
      </label>
      <div className="ml-auto flex gap-[5px] font-normal text-black">
        <button type="button" className="flex h-[18px] w-[99px] items-center rounded-sm border border-[#e9f1fb] bg-gradient-to-b from-white to-[#dbe8f8] pl-px shadow-[0_1px_1px_#7f9fcc]">
          <svg width="16" height="14" viewBox="0 0 16 14" aria-hidden="true">
            <path d="M5 1.500h9M5 12h9M13 1v11M10 3v8" stroke="#3f6b93" strokeWidth="1.800" fill="none" />
            <path d="M0 6l5-4.500V4h5v4H5v2.500z" fill="#6fbf59" stroke="#3a8730" strokeWidth=".7" />
          </svg>
          <span className="ml-2.5">&lt; Zurück</span>
        </button>
        <button type="button" className="flex h-[18px] w-[99px] items-center rounded-sm border border-[#e9f1fb] bg-gradient-to-b from-white to-[#dbe8f8] pl-0.5 shadow-[0_1px_1px_#7f9fcc]">
          <svg width="13" height="13" viewBox="0 0 13 13" aria-hidden="true">
            <circle cx="6.500" cy="6.500" r="5.800" fill="#8ccb78" stroke="#6cae5c" />
            <path d="M9 4a3.500 3.500 0 10.500 4.500L12 12" fill="none" stroke="#3d8a3c" strokeWidth="1.300" />
          </svg>
          <span className="-ml-1.5 whitespace-nowrap">Anmelden Sync</span>
        </button>
      </div>
    </div>
  );
}

function LogPanel() {
  return (
    <main className="flex min-w-0 flex-1 flex-col pr-1">
      <ToolBar />
      <div className="ml-1 flex min-h-0 flex-1 flex-col">
        <div className="flex h-[21px] shrink-0 items-end justify-between bg-[#5f769c] pl-1 pr-2 font-['Liberation_Sans',sans-serif] text-[12px] leading-[14px] text-white">
          <h2>Tastenanschläge</h2>
          <a href="#speichern" className="text-[#ffff1e]">
            Speichern unter
          </a>
        </div>
        <div className="flex min-h-0 flex-1 bg-white">
          <div className="min-w-0 flex-1 overflow-hidden pl-px pt-0.5 font-['Liberation_Mono','Noto_Sans_CJK_SC',monospace] text-[10px] leading-4">
            {LOG.map((line, i) => (
              <LogRow key={i} line={line} />
            ))}
          </div>
          <ScrollBar before="grow-[587]" thumb="grow-[28]" after="grow-[1]" />
        </div>
      </div>
    </main>
  );
}

function StatusBar() {
  return (
    <footer className="flex h-[22px] shrink-0 text-[11px] leading-[23px] text-[#15285c]">
      <div className="w-[579px] shrink-0 border-r border-white bg-gradient-to-b from-[#e1edfc] via-[#b4cff3] to-[#d7e6fa] pl-[3px]">Ready</div>
      <div className="flex min-w-0 flex-1 items-center border-l border-[#567db0] bg-gradient-to-b from-[#c3dafa] via-[#86abdf] to-[#7796c5] pl-1.5">
        <span className="w-[270px] shrink-0 whitespace-pre">Datenliste - Gruppen:1  Record:381  Ausgewählt:0</span>
        <Magnifier />
        <input type="text" aria-label="Suchen" className="ml-[7px] h-[15px] min-w-0 flex-1 bg-white px-1 text-[11px] outline-none" />
        <button type="button" aria-label="Weitersuchen" className="ml-[7px]">
          <Magnifier />
        </button>
        <button type="button" aria-label="Zurücksuchen" className="ml-[9px]">
          <Magnifier />
        </button>
        <svg width="12" height="12" viewBox="0 0 12 12" aria-hidden="true" className="ml-[11px] mt-1">
          <path d="M8 0h2v2H8zM4 4h2v2H4zM8 4h2v2H8zM0 8h2v2H0zM4 8h2v2H4zM8 8h2v2H8z" fill="#3c5f9b" />
        </svg>
      </div>
    </footer>
  );
}

export default function App() {
  return (
    <div className="flex h-screen flex-col border border-[#6b6b6b] bg-[#8e8e8e] px-[7px] pb-[7px] font-['Open_Sans','Noto_Sans',sans-serif]">
      <TitleBar />
      <div className="flex min-h-0 flex-1 flex-col bg-[#bfdbff]">
        <Tabs />
        <Ribbon />
        <div className="flex min-h-0 flex-1 bg-gradient-to-b from-[#b0c9ed] to-[#5c88c9] pt-0.5">
          <TreePanel />
          <LogPanel />
        </div>
        <div className="h-0.5 shrink-0 bg-[#5480bd]" />
        <StatusBar />
      </div>
    </div>
  );
}
